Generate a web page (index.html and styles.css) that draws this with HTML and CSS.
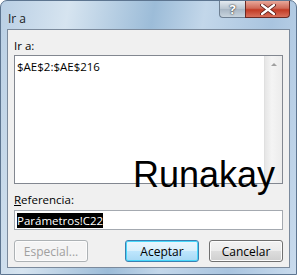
FILE: index.html
```html
<!DOCTYPE html>
<html lang="es">
<head>
    <meta charset="UTF-8">
    <title>Ir a</title>
    <link rel="stylesheet" href="styles.css">
</head>
<body>
    <div class="window">
        <div class="titlebar">
            <span class="title">Ir a</span>
            <div class="caption-buttons">
                <span class="btn-help">?</span>
                <span class="btn-close">
                    <svg width="16" height="11" viewBox="0 0 16 11">
                        <path d="M2 1 L14 10 M14 1 L2 10" stroke="#5a1f1a" stroke-width="4" stroke-linecap="round"/>
                        <path d="M2 1 L14 10 M14 1 L2 10" stroke="#fff" stroke-width="2.2" stroke-linecap="round"/>
                    </svg>
                </span>
            </div>
        </div>
        <div class="client">
            <label class="label">Ir a:</label>
            <div class="listbox">
                <div class="items">
                    <div class="item">$AE$2:$AE$216</div>
                </div>
                <div class="scrollbar">
                    <span class="arrow-up"></span>
                </div>
            </div>
            <label class="label ref-label"><u>R</u>eferencia:</label>
            <div class="textbox"><span class="selected">Parámetros!C22</span></div>
            <div class="buttons">
                <button class="button" disabled>Especial...</button>
                <span class="spacer"></span>
                <button class="button default">Aceptar</button>
                <button class="button">Cancelar</button>
            </div>
            <div class="watermark">Runakay</div>
        </div>
    </div>
</body>
</html>
```

FILE: styles.css
```css
body {
    margin: 0;
    font-family: "Open Sans", "Noto Sans", sans-serif;
    font-size: 11.5px;
    color: #000;
}

.window {
    width: 297px;
    height: 275px;
    box-sizing: border-box;
    border-radius: 7px 7px 0 0;
    background: linear-gradient(100deg, #b9cfe4 0%, #d6e4f0 20%, #9cbcd8 45%, #c3d7ea 60%, #a9c4df 80%, #c9dbed 100%);
    border: 1px solid #5d7590;
    display: flex;
    flex-direction: column;
}

.titlebar {
    height: 28px;
    display: flex;
    align-items: flex-start;
    justify-content: space-between;
    padding-left: 7px;
}

.title {
    margin-top: 9px;
    font-size: 12px;
    color: #1a1a1a;
}

.caption-buttons {
    display: flex;
    margin-right: 6px;
}

.btn-help {
    width: 26px;
    height: 17px;
    box-sizing: border-box;
    border: 1px solid #6e7f92;
    border-top: none;
    border-right: none;
    border-radius: 0 0 0 4px;
    background: linear-gradient(#e4eaf0, #b8c4d0 50%, #a8b6c4 51%, #c8d4de);
    color: #fff;
    font-weight: bold;
    font-size: 13px;
    line-height: 16px;
    text-align: center;
    text-shadow: 0 0 2px #333, 0 0 1px #333;
}

.btn-close {
    width: 45px;
    height: 17px;
    box-sizing: border-box;
    border: 1px solid #6a2a24;
    border-top: none;
    border-radius: 0 0 4px 0;
    background: linear-gradient(#e8a89a, #d06a58 45%, #c23a24 55%, #d8705c);
    display: flex;
    align-items: center;
    justify-content: center;
}

.client {
    flex: 1;
    margin: 0 6px 6px 6px;
    background: #f0f0f0;
    border: 1px solid #7b8a9c;
    padding: 9px 6px 0 6px;
    display: flex;
    flex-direction: column;
    position: relative;
}

.label {
    height: 14px;
    line-height: 14px;
}

.listbox {
    margin-top: 2px;
    height: 127px;
    border: 1px solid #828790;
    background: #fff;
    display: flex;
}

.items {
    flex: 1;
    padding: 3px 2px;
}

.item {
    line-height: 15px;
}

.scrollbar {
    width: 17px;
    background: linear-gradient(90deg, #e6e6e6, #f4f4f4 40%, #ececec);
    border-left: 1px solid #e0e0e0;
    display: flex;
    justify-content: center;
}

.arrow-up {
    margin-top: 7px;
    width: 0;
    height: 0;
    border-left: 3px solid transparent;
    border-right: 3px solid transparent;
    border-bottom: 3px solid #a0a0a0;
}

.ref-label {
    margin-top: 9px;
}

.textbox {
    margin-top: 3px;
    height: 20px;
    box-sizing: border-box;
    border: 1px solid #a4a9b0;
    background: #fff;
    padding: 2px 2px;
    line-height: 15px;
}

.selected {
    background: #000;
    color: #fff;
}

.buttons {
    margin-top: 10px;
    display: flex;
    gap: 10px;
}

.spacer {
    flex: 1;
}

.button {
    width: 74px;
    height: 22px;
    font-family: inherit;
    font-size: 12px;
    border: 1px solid #707070;
    border-radius: 3px;
    background: linear-gradient(#f2f2f2, #ebebeb 50%, #dddddd 51%, #cfcfcf);
    box-shadow: inset 0 0 0 1px #fcfcfc;
    padding: 0;
    color: #000;
}

.button:disabled {
    color: #a0a0a0;
    border-color: #adb2b5;
    background: #f4f4f4;
}

.button.default {
    border-color: #3c7fb1;
    box-shadow: inset 0 0 0 1px #48d8fb;
    background: linear-gradient(#eaf6fd, #d9f0fc 50%, #bee6fd 51%, #a7d9f5);
}

.watermark {
    position: absolute;
    left: 125px;
    top: 124px;
    font-family: "Liberation Sans", Arial, sans-serif;
    font-size: 36px;
    color: #000;
}
```
